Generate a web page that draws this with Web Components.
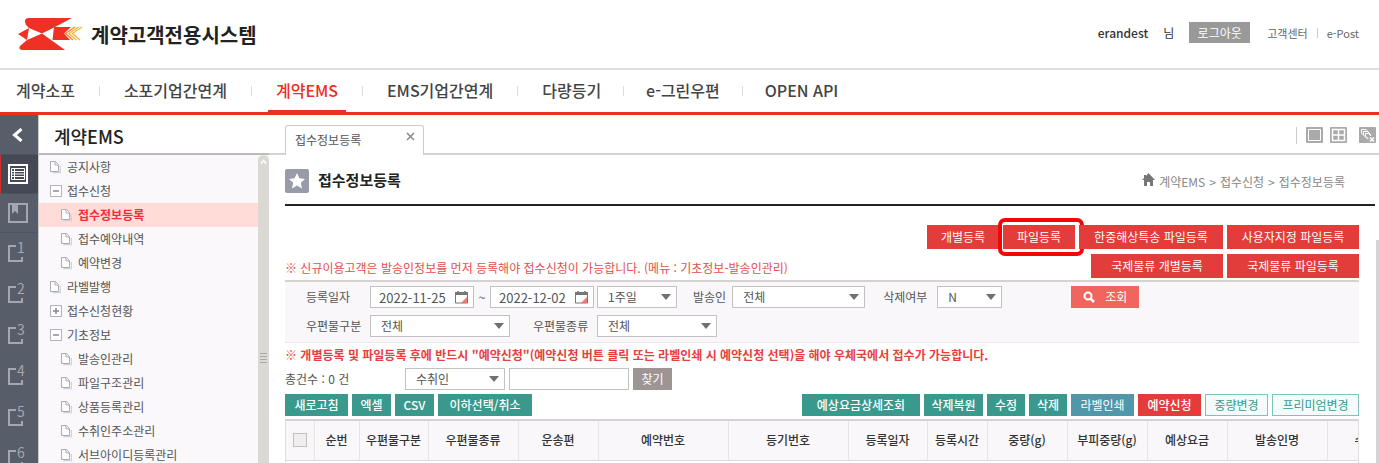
<!DOCTYPE html>
<html lang="ko">
<head>
<meta charset="utf-8">
<title>계약고객전용시스템</title>
<style>
  html, body { margin: 0; height: 100%; }
  body { font: 12px/16px "Noto Sans CJK KR", "Noto Sans", sans-serif; color: #555; background: #fff; overflow: hidden; }
</style>
</head>
<body>
<ems-app></ems-app>
<script>
const define = (name, html) => customElements.define(name, class extends HTMLElement {
  constructor() {
    super();
    this.attachShadow({ mode: 'open' });
  }
  connectedCallback() {
    if (this.shadowRoot.childNodes.length) return;
    const t = document.createElement('template');
    t.innerHTML = '<style>*{box-sizing:border-box}a{color:inherit;text-decoration:none}</style>' +
      (typeof html === 'function' ? html(this) : html);
    this.shadowRoot.append(t.content.cloneNode(true));
  }
});

define('brand-logo', `
<style>
  :host { display: flex; align-items: center; }
  a { display: flex; align-items: center; gap: 7px; color: #222; font-size: 20px; line-height: 30px; font-weight: 700; }
  svg { display: block; }
  span { padding-top: 2px; }
</style>
<a href="#">
  <svg width="66" height="33" viewBox="0 0 66 33" aria-hidden="true">
    <g fill="#ee3124">
      <path d="M10 0H54L37 9L24 15.500L11 10L8 7Q5 1 10 0Z"/>
      <path d="M11 10L9 22L0 16Z"/>
      <path d="M24 15.500L47 32H4Q0 31 2 28L9 22Z"/>
      <path d="M36 9H53L46 15.500L52 22H34.500Z"/>
    </g>
    <path d="M57 9L47.500 15.500L55 22" fill="none" stroke="#f58a3c" stroke-width="1.500"/>
    <path d="M60.500 9L51 15.500L58.500 22M64 9L54.500 15.500L62 22" fill="none" stroke="#fbb83a" stroke-width="1.500"/>
  </svg>
  <span>계약고객전용시스템</span>
</a>`);

define('site-header', `
<style>
  :host { display: flex; justify-content: space-between; align-items: center; height: 70px; padding: 0 20px 0 18px; border-bottom: 2px solid #dedede; }
  .user { display: flex; align-items: center; color: #333; padding-bottom: 3px; }
  .user b { font-weight: 500; margin-right: 15px; }
  button { font: inherit; line-height: 18px; height: 21px; width: 61px; padding: 0; margin: 0 17px 0 15px; border: 0; background: #999; color: #fff; }
  .links { display: flex; align-items: center; font-size: 11px; color: #666; }
  i { width: 1px; height: 10px; background: #ccc; margin: 0 9px; }
</style>
<brand-logo></brand-logo>
<div class="user"><b>erandest</b><span>님</span><button>로그아웃</button>
  <span class="links"><a href="#">고객센터</a><i></i><a href="#">e-Post</a></span></div>`);

define('main-nav', `
<style>
  :host { display: block; border-bottom: 3px solid #ee2e1f; }
  nav { display: flex; height: 42px; padding-left: 8px; font-size: 16px; line-height: 24px; font-weight: 500; color: #444; }
  a { display: flex; align-items: center; padding: 0 8px 2px; }
  a[aria-current] { color: #ee2e1f; border-bottom: 2px solid #ee2e1f; padding-bottom: 0; }
  i { width: 1px; height: 10px; align-self: center; background: #ddd; margin: 0 16px; }
  .n { margin: 0 14px; }
</style>
<nav>
  <a href="#">계약소포</a><i></i><a href="#">소포기업간연계</a><i></i><a href="#" aria-current="page">계약EMS</a><i></i><a href="#">EMS기업간연계</a><i></i><a href="#">다량등기</a><i class="n"></i><a href="#">e-그린우편</a><i class="n"></i><a href="#">OPEN API</a>
</nav>`);

define('side-rail', `
<style>
  :host { display: flex; flex-direction: column; background: #575d69; overflow: hidden; }
  button { flex: none; display: flex; align-items: center; justify-content: flex-start; width: 100%; height: 39px; padding: 0 0 0 8px; border: 0; background: none; color: #a2a7b0; border-bottom: 1px solid #4d535f; font: 14px/16px "Noto Sans CJK KR", sans-serif; }
  .back { height: 40px; padding-left: 11px; color: #fff; }
  .on { background: #444955; color: #fff; border-left: 1px solid #d0302c; padding-left: 7px; }
  .num { height: 41px; border: 0; }
  .num span { align-self: flex-start; margin: 6px 0 0 -7px; }
</style>
<button class="back" aria-label="닫기"><svg width="13" height="14" viewBox="0 0 13 14"><path d="M10.500 1L3.500 7L10.500 13" fill="none" stroke="currentColor" stroke-width="3"/></svg></button>
<button class="on" aria-label="메뉴"><svg width="20" height="20" viewBox="0 0 20 20" fill="none" stroke="currentColor"><path d="M1 1H19V19H1Z" stroke-width="2"/><path d="M3.500 4.500H16.500V15.500H3.500ZM6.500 4.500V15.500M3.500 7.500H16.500M3.500 10H16.500M3.500 12.500H16.500"/></svg></button>
<button aria-label="즐겨찾기"><svg width="20" height="20" viewBox="0 0 20 20"><path d="M1 1H19V19H1Z" fill="none" stroke="currentColor" stroke-width="2"/><path d="M4 2H10V11L7 8L4 11Z" fill="currentColor"/></svg></button>
${[1, 2, 3, 4, 5, 6].map(n => `<button class="num"><svg width="16" height="17" viewBox="0 0 16 17"><path d="M8 1H1V16H14V12" fill="none" stroke="currentColor" stroke-width="2"/></svg><span>${n}</span></button>`).join('')}`);

const treeIcon = {
  page: '<svg width="11" height="13" viewBox="0 0 11 13"><path d="M2.500 11.500H10.500V5" fill="none" stroke="#d0d2d8" stroke-width="1.500"/><path d="M.5.5H5.500L8.500 3.500V10.500H.5Z" fill="#fff" stroke="#a8acb6"/><path d="M5 .5V4H8.500" fill="none" stroke="#a8acb6"/></svg>',
  minus: '<svg width="12" height="12" viewBox="0 0 12 12"><path d="M.5.5H11.500V11.500H.5Z" fill="#fff" stroke="#aeb3bf"/><path d="M3 6H9" stroke="#858b9a" stroke-width="1.500"/></svg>',
  plus: '<svg width="12" height="12" viewBox="0 0 12 12"><path d="M.5.5H11.500V11.500H.5Z" fill="#fff" stroke="#aeb3bf"/><path d="M3 6H9M6 3V9" stroke="#858b9a" stroke-width="1.500"/></svg>'
};
define('tree-item', el => `
<style>
  :host { display: block; }
  a { display: flex; align-items: center; height: 24px; padding-left: 11px; }
  .icon { width: 12px; margin-right: 5px; display: flex; }
  :host([level="2"]) a { padding-left: 22px; }
  :host([active]) a { background: #ffdcd8; color: #ee2e3a; font-weight: 700; }
</style>
<a href="#"><span class="icon">${treeIcon[el.getAttribute('icon')]}</span><slot></slot></a>`);

define('side-menu', `
<style>
  :host { display: flex; flex-direction: column; border-left: 1px solid #ccc; overflow: hidden; }
  h2 { flex: none; margin: 0; height: 40px; padding: 5px 0 0 15px; font-size: 18px; line-height: 32px; font-weight: 500; color: #222; border-bottom: 2px solid #bbb; }
  .body { flex: 1; min-height: 0; display: flex; background: #faf8fa; }
  nav { flex: 1; overflow: hidden; }
  .bar { width: 11px; background: #dcd9d5; border-radius: 6px 6px 0 0; display: flex; flex-direction: column; align-items: center; justify-content: space-between; padding-top: 4px; }
  .grip { margin-bottom: 100px; }
  svg { display: block; }
</style>
<h2>계약EMS</h2>
<div class="body">
  <nav>
    <tree-item icon="page">공지사항</tree-item>
    <tree-item icon="minus">접수신청</tree-item>
    <tree-item icon="page" level="2" active>접수정보등록</tree-item>
    <tree-item icon="page" level="2">접수예약내역</tree-item>
    <tree-item icon="page" level="2">예약변경</tree-item>
    <tree-item icon="page">라벨발행</tree-item>
    <tree-item icon="plus">접수신청현황</tree-item>
    <tree-item icon="minus">기초정보</tree-item>
    <tree-item icon="page" level="2">발송인관리</tree-item>
    <tree-item icon="page" level="2">파일구조관리</tree-item>
    <tree-item icon="page" level="2">상품등록관리</tree-item>
    <tree-item icon="page" level="2">수취인주소관리</tree-item>
    <tree-item icon="page" level="2">서브아이디등록관리</tree-item>
  </nav>
  <div class="bar">
    <svg width="7" height="6" viewBox="0 0 7 6"><path d="M1 4.500L3.500 1.500L6 4.500" fill="none" stroke="#fff" stroke-width="1.500"/></svg>
    <svg class="grip" width="9" height="11" viewBox="0 0 9 11"><path d="M1 1.500H8M1 4.500H8M1 7.500H8M1 10.500H8" stroke="#aaa"/></svg>
  </div>
</div>`);

define('tab-strip', `
<style>
  :host { display: flex; align-items: flex-end; height: 40px; box-sizing: border-box; padding: 0 3px 0 16px; box-shadow: inset 0 -2px #d4d4d4; }
  .tab { display: flex; justify-content: space-between; width: 139px; height: 30px; padding: 6px 8px 0 9px; background: #fff; border: 1px solid #ccc; border-bottom: 0; border-radius: 3px 3px 0 0; }
  button { border: 0; padding: 0; background: none; height: 9px; }
  svg { display: block; }
  .tools { margin-left: auto; display: flex; align-items: center; height: 40px; }
  i { width: 1px; height: 17px; background: #ccc; margin-right: 9px; }
  .tools button { height: 17px; margin-right: 7px; }
  .tools .wide { margin-right: 12px; }
  .tools .last { margin-right: 0; }
</style>
<div class="tab"><a href="#">접수정보등록</a><button aria-label="탭 닫기"><svg width="9" height="9" viewBox="0 0 9 9"><path d="M1 1L8 8M8 1L1 8" stroke="#888" stroke-width="1.500"/></svg></button></div>
<div class="tools"><i></i>
  <button aria-label="단일 보기"><svg width="17" height="17" viewBox="0 0 17 17"><rect width="17" height="16" rx="1" fill="#aaa"/><path d="M2.500 2.500H14.500V13.500H2.500Z" fill="#aaa" stroke="#fff"/></svg></button>
  <button class="wide" aria-label="분할 보기"><svg width="17" height="17" viewBox="0 0 17 17"><rect width="17" height="16" rx="1" fill="#aaa"/><path d="M2.500 2.500H14.500V13.500H2.500ZM8.500 2.500V13.500M2.500 8H14.500" fill="none" stroke="#fff" stroke-width="1.500"/></svg></button>
  <button class="last" aria-label="모두 닫기"><svg width="17" height="17" viewBox="0 0 17 17"><rect width="17" height="16" rx="1" fill="#aaa"/><path d="M2.500 6V2.500H7L11 7M4.500 8V4.500H8.500L12 8M2.500 6L9 12.500M6.500 9V6.500H9.500L12 9M6.500 9L9 11.500" fill="none" stroke="#fff"/><path d="M11 10.500L15 14.500M15 10.500L11 14.500" stroke="#fff" stroke-width="1.500"/></svg></button>
</div>`);

define('page-title', `
<style>
  :host { display: flex; align-items: center; height: 51px; border-bottom: 2px solid #222; box-sizing: border-box; padding-right: 30px; }
  .star { display: flex; align-items: center; justify-content: center; width: 24px; height: 24px; border-radius: 2px; background: #989ca9; margin: 2px 9px 0 0; }
  h1 { margin: 0; font-size: 15px; line-height: 24px; color: #222; font-weight: 700; }
  nav { margin-left: auto; display: flex; align-items: center; gap: 4px; color: #888; padding-top: 4px; }
  nav svg { margin-top: -4px; }
</style>
<span class="star"><svg width="18" height="18" viewBox="0 0 18 18"><path d="M9 1L11.400 6.300L17 6.900L12.800 10.700L14 16.500L9 13.500L4 16.500L5.200 10.700L1 6.900L6.600 6.300Z" fill="#fff"/></svg></span>
<h1>접수정보등록</h1>
<nav><svg width="13" height="13" viewBox="0 0 13 13"><path d="M6.500 0L13 7H11V13H8V9H5V13H2V7H0L2 5V2H4V3Z" fill="#777"/></svg><a href="#">계약EMS</a><span>&gt;</span><a href="#">접수신청</a><span>&gt;</span><a href="#">접수정보등록</a></nav>`);

const kinds = {
  red: 'background:#e23c3b;color:#fff;height:24px',
  coral: 'background:#f0665e;color:#fff',
  grey: 'background:#9c9594;color:#fff',
  green: 'background:#38998c;color:#fff;font-weight:500',
  blue: 'background:#4f97a9;color:#fff',
  alert: 'background:#e23c3b;color:#fff;font-weight:500',
  line: 'background:#f3fcfb;color:#38998c;border:1px solid #7cc4bb'
};
define('ui-button', el => `
<style>
  :host { display: block; position: relative; flex: none; width: ${el.getAttribute('w')}px; }
  button { display: flex; align-items: center; justify-content: center; gap: 10px; width: 100%; height: 22px; margin: 0; padding: 0 0 1px; border: 0; font: inherit; white-space: nowrap; ${kinds[el.getAttribute('kind')]} }
  .ring { position: absolute; inset: -7px -9px -7px -5px; border: 4px solid #f50505; border-radius: 7px; pointer-events: none; }
</style>
<button><slot name="icon"></slot><slot></slot></button>${el.hasAttribute('ring') ? '<span class="ring"></span>' : ''}`);

define('ui-select', el => `
<style>
  :host { display: block; position: relative; flex: none; width: ${el.getAttribute('w')}px; }
  select { appearance: none; display: block; width: 100%; height: 22px; margin: 0; padding: 0 10px 1px; border: 1px solid #c2c2c2; border-radius: 0; background: #fff; color: #555; font: inherit; }
  svg { position: absolute; right: 6px; top: 8px; pointer-events: none; }
</style>
<select aria-label="${el.getAttribute('label')}"><option>${el.getAttribute('value')}</option></select>
<svg width="10" height="6" viewBox="0 0 10 6"><path d="M0 0H10L5 6Z" fill="#707070"/></svg>`);

define('date-box', el => `
<style>
  :host { display: flex; flex: none; width: 104px; height: 22px; box-sizing: border-box; border: 1px solid #c2c2c2; background: #fff; align-items: center; }
  input { flex: 1; min-width: 0; height: 20px; border: 0; padding: 0 0 0 8px; background: none; color: #555; font: 13px/18px "Noto Sans CJK KR", sans-serif; }
  button { border: 0; padding: 0; margin-right: 5px; background: none; }
  svg { display: block; }
</style>
<input type="text" aria-label="${el.getAttribute('label')}" value="${el.getAttribute('value')}">
<button aria-label="달력"><svg width="13" height="13" viewBox="0 0 13 13"><path d="M.5 2H12.500V12H.5Z" fill="#fff" stroke="#777"/><path d="M0 1H13V4H0Z" fill="#777"/><path d="M3 0V2M10 0V2" stroke="#777" stroke-width="1.500"/><path d="M12 6V12H6Z" fill="#f0776c"/></svg></button>`);

define('top-actions', `
<style>
  :host { display: grid; grid-template-columns: 1fr auto; row-gap: 5px; padding: 19px 0 2px; }
  div { display: flex; justify-content: flex-end; gap: 4px; }
  .first { grid-column: 1 / 3; }
  p { margin: 0; color: #e2504c; height: 24px; line-height: 28px; white-space: nowrap; }
</style>
<div class="first">
  <ui-button kind="red" w="72">개별등록</ui-button>
  <ui-button kind="red" w="72" ring>파일등록</ui-button>
  <ui-button kind="red" w="144">한중해상특송 파일등록</ui-button>
  <ui-button kind="red" w="132">사용자지정 파일등록</ui-button>
</div>
<p>※ 신규이용고객은 발송인정보를 먼저 등록해야 접수신청이 가능합니다. (메뉴 : 기초정보-발송인관리)</p>
<div><ui-button kind="red" w="132">국제물류 개별등록</ui-button><ui-button kind="red" w="132">국제물류 파일등록</ui-button></div>`);

define('search-form', `
<style>
  :host { display: block; background: #f9f7f9; border-top: 2px solid #d6d2d2; border-bottom: 1px solid #ebe8ea; }
  form { display: flex; flex-direction: column; gap: 7px; padding: 4px 0 5px 21px; }
  .row { display: flex; align-items: center; height: 22px; }
  .l { width: 64px; }
  .t { width: 16px; text-align: center; }
  .g { margin-left: 3px; }
  .s { margin: 0 6px 0 16px; }
  .d { margin: 0 10px 0 18px; }
  .m { width: 64px; margin-left: 23px; }
  .go { margin-left: 69px; }
</style>
<form>
  <div class="row">
    <span class="l">등록일자</span>
    <date-box label="시작일" value="2022-11-25"></date-box><span class="t">~</span><date-box label="종료일" value="2022-12-02"></date-box>
    <ui-select class="g" w="80" label="기간" value="1주일"></ui-select>
    <span class="s">발송인</span><ui-select w="133" label="발송인" value="전체"></ui-select>
    <span class="d">삭제여부</span><ui-select w="65" label="삭제여부" value="N"></ui-select>
    <ui-button class="go" kind="coral" w="68"><svg slot="icon" width="12" height="12" viewBox="0 0 12 12"><circle cx="5" cy="5" r="3.500" fill="none" stroke="#fff" stroke-width="2"/><path d="M7.500 7.500L11 11" stroke="#fff" stroke-width="2.500"/></svg>조회</ui-button>
  </div>
  <div class="row">
    <span class="l">우편물구분</span><ui-select w="140" label="우편물구분" value="전체"></ui-select>
    <span class="m">우편물종류</span><ui-select w="120" label="우편물종류" value="전체"></ui-select>
  </div>
</form>`);

define('result-tools', `
<style>
  :host { display: block; }
  p { margin: 0; padding: 0 0 1px; font-weight: 700; color: #e8403c; line-height: 24px; white-space: nowrap; }
  .row { display: flex; align-items: center; gap: 4px; height: 22px; }
  .bar { margin: 4px 0 3px; }
  .count { width: 116px; }
  input { width: 120px; height: 22px; margin: 0; border: 1px solid #c2c2c2; background: #fff; font: inherit; }
  .end { margin-left: auto; }
</style>
<p>※ 개별등록 및 파일등록 후에 반드시 "예약신청"(예약신청 버튼 클릭 또는 라벨인쇄 시 예약신청 선택)을 해야 우체국에서 접수가 가능합니다.</p>
<div class="row"><span class="count">총건수 : 0 건</span><ui-select w="100" label="검색 조건" value="수취인"></ui-select><input type="text" aria-label="검색어"><ui-button kind="grey" w="39">찾기</ui-button></div>
<div class="row bar">
  <ui-button kind="green" w="63">새로고침</ui-button><ui-button kind="green" w="39">엑셀</ui-button><ui-button kind="green" w="39">CSV</ui-button><ui-button kind="green" w="94">이하선택/취소</ui-button>
  <ui-button class="end" kind="green" w="118">예상요금상세조회</ui-button><ui-button kind="green" w="59">삭제복원</ui-button><ui-button kind="green" w="38">수정</ui-button><ui-button kind="green" w="38">삭제</ui-button><ui-button kind="blue" w="63">라벨인쇄</ui-button><ui-button kind="alert" w="63">예약신청</ui-button><ui-button kind="line" w="63">중량변경</ui-button><ui-button kind="line" w="87">프리미엄변경</ui-button>
</div>`);

const columns = [['순번', 45], ['우편물구분', 69], ['우편물종류', 90], ['운송편', 80], ['예약번호', 130], ['등기번호', 120], ['등록일자', 79], ['등록시간', 60], ['중량(g)', 80], ['부피중량(g)', 80], ['예상요금', 80], ['발송인명', 100], ['수', 66]];
define('result-table', `
<style>
  :host { display: block; flex: 1; overflow: hidden; border: 1px solid #e4dede; border-top: 2px solid #d6d2d2; border-bottom: 0; }
  table { border-collapse: collapse; table-layout: fixed; width: 1107px; background: #f9f7f9; }
  th { height: 39px; padding: 0; border-right: 1px solid #e8e3e4; border-bottom: 1px solid #e4d8d8; font-weight: 500; color: #333; white-space: nowrap; }
  input { appearance: none; display: block; width: 14px; height: 14px; margin: 0 auto; border: 1px solid #c4c0c0; background: #eee; }
</style>
<table>
  <colgroup><col style="width:28px">${columns.map(c => `<col style="width:${c[1]}px">`).join('')}</colgroup>
  <thead><tr><th><input type="checkbox" aria-label="전체 선택"></th>${columns.map(c => `<th scope="col">${c[0]}</th>`).join('')}</tr></thead>
</table>`);

define('ems-app', `
<style>
  :host { display: flex; flex-direction: column; height: 100vh; overflow: hidden; }
  site-header, main-nav { flex: none; box-sizing: border-box; }
  .shell { flex: 1; min-height: 0; display: grid; grid-template-columns: 38px 231px minmax(0, 1fr); grid-template-rows: minmax(0, 1fr); }
  main { display: flex; flex-direction: column; min-width: 0; }
  .page { flex: 1; min-height: 0; display: flex; flex-direction: column; padding-left: 16px; }
  page-title { margin-right: 4px; }
  .scroll { flex: 1; min-height: 0; display: grid; grid-template-columns: minmax(0, 1fr) 3px; column-gap: 17px; }
  .content { display: flex; flex-direction: column; min-height: 0; }
  .track { margin-top: 34px; background: #d4d4d4; }
</style>
<site-header></site-header>
<main-nav></main-nav>
<div class="shell">
  <side-rail></side-rail>
  <side-menu></side-menu>
  <main>
    <tab-strip></tab-strip>
    <div class="page">
      <page-title></page-title>
      <div class="scroll">
        <div class="content">
          <top-actions></top-actions>
          <search-form></search-form>
          <result-tools></result-tools>
          <result-table></result-table>
        </div>
        <div class="track"></div>
      </div>
    </div>
  </main>
</div>`);
</script>
</body>
</html>
